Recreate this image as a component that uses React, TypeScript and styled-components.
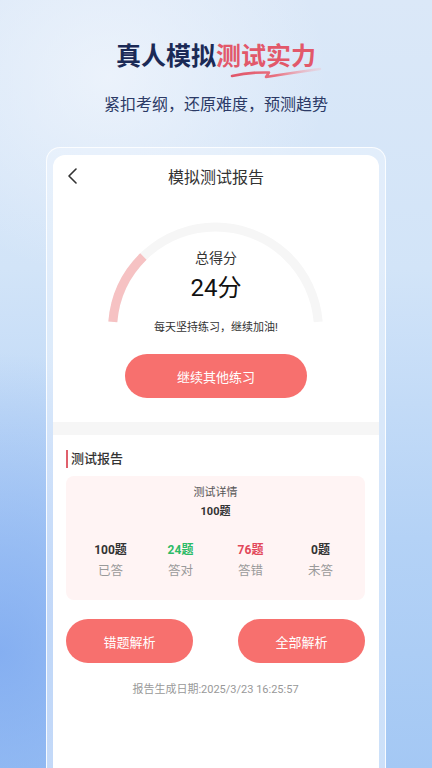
import React from "react";
import styled, { createGlobalStyle } from "styled-components";

const GlobalStyle = createGlobalStyle`
  html, body {
    margin: 0;
    padding: 0;
  }
  body {
    font-family: Roboto, "Noto Sans CJK SC", sans-serif;
    overflow: hidden;
  }
  * {
    box-sizing: border-box;
  }
`;

const stats = [
  { value: "100题", label: "已答", color: "#333333" },
  { value: "24题", label: "答对", color: "#2dbb67" },
  { value: "76题", label: "答错", color: "#e2485a" },
  { value: "0题", label: "未答", color: "#333333" },
];

// gauge geometry (svg box coords)
const CX = 114.5;
const CY = 115;
const R = 103;
const START = 175.5;
const END = 4.5;
const SCORE = 24;

const pt = (deg: number) => {
  const a = (deg * Math.PI) / 180;
  return [CX + R * Math.cos(a), CY - R * Math.sin(a)];
};

const arc = (from: number, to: number) => {
  const [x1, y1] = pt(from);
  const [x2, y2] = pt(to);
  const large = from - to > 180 ? 1 : 0;
  return `M ${x1} ${y1} A ${R} ${R} 0 ${large} 1 ${x2} ${y2}`;
};

export default function App() {
  const scoreEnd = START - ((START - END) * SCORE) / 100;
  return (
    <>
      <GlobalStyle />
      <Page>
        <Hero>
          <HeroTitle>
            真人模拟
            <Accent>
              测试实力
              <Swoosh viewBox="0 0 90 14" aria-hidden>
                <defs>
                  <linearGradient id="sw" x1="0" x2="1" y1="0" y2="0">
                    <stop offset="0" stopColor="#e0566a" />
                    <stop offset="0.5" stopColor="#e8707f" />
                    <stop offset="1" stopColor="#f3b6c0" stopOpacity="0.3" />
                  </linearGradient>
                </defs>
                <path
                  d="M1 10 Q 18 6 38 6.5 L 35 11 Q 60 7 89 3"
                  fill="none"
                  stroke="url(#sw)"
                  strokeWidth="2.6"
                  strokeLinecap="round"
                  strokeLinejoin="round"
                />
              </Swoosh>
            </Accent>
          </HeroTitle>
          <HeroSub>紧扣考纲，还原难度，预测趋势</HeroSub>
        </Hero>

        <Shell>
          <Card>
            <Header>
              <BackButton aria-label="返回">
                <svg width="11" height="16" viewBox="0 0 11 16">
                  <polyline
                    points="9,1 2,8 9,15"
                    fill="none"
                    stroke="#333"
                    strokeWidth="1.6"
                    strokeLinecap="round"
                    strokeLinejoin="round"
                  />
                </svg>
              </BackButton>
              <HeaderTitle>模拟测试报告</HeaderTitle>
            </Header>

            <ScoreSection>
              <Gauge>
                <GaugeArc viewBox="0 0 230 120">
                  <path d={arc(START, END)} fill="none" stroke="#f6f6f6" strokeWidth="9" />
                  <path d={arc(START, scoreEnd)} fill="none" stroke="#f6c2c3" strokeWidth="9" />
                </GaugeArc>
                <GaugeLabel>总得分</GaugeLabel>
                <GaugeScore>24分</GaugeScore>
              </Gauge>
              <Encourage>每天坚持练习，继续加油!</Encourage>
              <PrimaryButton $width={182}>继续其他练习</PrimaryButton>
            </ScoreSection>

            <Divider />

            <ReportSection>
              <SectionTitle>测试报告</SectionTitle>
              <DetailBox>
                <DetailTitle>测试详情</DetailTitle>
                <DetailTotal>100题</DetailTotal>
                <StatGrid>
                  {stats.map((s) => (
                    <Stat key={s.label}>
                      <StatValue $color={s.color}>{s.value}</StatValue>
                      <StatLabel>{s.label}</StatLabel>
                    </Stat>
                  ))}
                </StatGrid>
              </DetailBox>
              <ButtonRow>
                <PrimaryButton $width={127}>错题解析</PrimaryButton>
                <PrimaryButton $width={127}>全部解析</PrimaryButton>
              </ButtonRow>
              <DateText>报告生成日期:2025/3/23 16:25:57</DateText>
            </ReportSection>
          </Card>
        </Shell>
      </Page>
    </>
  );
}

const Page = styled.div`
  width: 432px;
  height: 768px;
  display: flex;
  flex-direction: column;
  overflow: hidden;
  background:
    radial-gradient(ellipse 260px 300px at 0% 85%, rgba(120, 165, 240, 0.75), rgba(120, 165, 240, 0) 100%),
    radial-gradient(ellipse 220px 200px at 25% 10%, rgba(240, 245, 252, 0.8), rgba(240, 245, 252, 0) 100%),
    linear-gradient(180deg, #dbe8f8 0%, #d2e4f8 35%, #b4d2f6 70%, #a4c8f4 100%);
`;

const Hero = styled.div`
  padding-top: 44px;
  display: flex;
  flex-direction: column;
  align-items: center;
`;

const HeroTitle = styled.h1`
  margin: 0;
  font-size: 25px;
  line-height: 26px;
  font-weight: 700;
  color: #1b2a56;
  letter-spacing: 0;
`;

const Accent = styled.span`
  position: relative;
  color: #e2586a;
`;

const Swoosh = styled.svg`
  position: absolute;
  left: 14px;
  top: 24px;
  width: 92px;
  height: 14px;
`;

const HeroSub = styled.p`
  margin: 27px 0 0;
  font-size: 16px;
  line-height: 16px;
  color: #2c3a66;
`;

const Shell = styled.div`
  flex: 1;
  margin: 34px 46px 0;
  padding: 7px 6px 0;
  border: 1px solid rgba(255, 255, 255, 0.85);
  border-bottom: none;
  border-radius: 14px 14px 0 0;
  background: rgba(236, 244, 253, 0.55);
  display: flex;
`;

const Card = styled.div`
  flex: 1;
  background: #ffffff;
  border-radius: 12px 12px 0 0;
  display: flex;
  flex-direction: column;
`;

const Header = styled.div`
  position: relative;
  height: 42px;
  display: flex;
  align-items: center;
  justify-content: center;
`;

const BackButton = styled.button`
  position: absolute;
  left: 14px;
  top: 13px;
  border: none;
  background: none;
  padding: 0;
  display: flex;
`;

const HeaderTitle = styled.div`
  font-size: 16px;
  color: #333333;
`;

const ScoreSection = styled.div`
  display: flex;
  flex-direction: column;
  align-items: center;
  padding-top: 18px;
`;

const Gauge = styled.div`
  position: relative;
  width: 230px;
  height: 100px;
  padding-top: 33px;
  display: flex;
  flex-direction: column;
  align-items: center;
`;

const GaugeArc = styled.svg`
  position: absolute;
  left: 0;
  top: 0;
  width: 230px;
  height: 120px;
`;

const GaugeLabel = styled.div`
  position: relative;
  font-size: 14px;
  line-height: 20px;
  color: #333333;
`;

const GaugeScore = styled.div`
  position: relative;
  margin-top: 5px;
  font-size: 24px;
  line-height: 30px;
  color: #111111;
`;

const Encourage = styled.div`
  margin-top: 5px;
  font-size: 11px;
  line-height: 16px;
  color: #333333;
`;

const PrimaryButton = styled.button<{ $width: number }>`
  width: ${(p) => p.$width}px;
  height: 44px;
  border: none;
  border-radius: 22px;
  background: #f7706e;
  color: #ffffff;
  font-family: Roboto, "Noto Sans CJK SC", sans-serif;
  font-size: 13px;
  margin-top: 18px;
  padding: 0;
`;

const Divider = styled.div`
  height: 13px;
  margin-top: 24px;
  background: #f6f6f6;
`;

const ReportSection = styled.div`
  padding: 15px 14px 0 13px;
  display: flex;
  flex-direction: column;
`;

const SectionTitle = styled.div`
  font-size: 13px;
  line-height: 18px;
  font-weight: 500;
  color: #333333;
  border-left: 2px solid #e0606c;
  padding-left: 3px;
  height: 18px;
  display: flex;
  align-items: center;
`;

const DetailBox = styled.div`
  margin-top: 8px;
  background: #fff4f4;
  border-radius: 8px;
  padding: 8px 0 20px;
  display: flex;
  flex-direction: column;
  align-items: center;
`;

const DetailTitle = styled.div`
  font-size: 11px;
  line-height: 17px;
  color: #555555;
`;

const DetailTotal = styled.div`
  margin-top: 3px;
  font-size: 11px;
  line-height: 16px;
  font-weight: 700;
  color: #333333;
`;

const StatGrid = styled.div`
  margin-top: 21px;
  display: grid;
  grid-template-columns: repeat(4, 70px);
  justify-content: center;
`;

const Stat = styled.div`
  display: flex;
  flex-direction: column;
  align-items: center;
`;

const StatValue = styled.div<{ $color: string }>`
  font-size: 12px;
  line-height: 18px;
  font-weight: 700;
  color: ${(p) => p.$color};
`;

const StatLabel = styled.div`
  margin-top: 3px;
  font-size: 12.5px;
  line-height: 18px;
  color: #9a9a9a;
`;

const ButtonRow = styled.div`
  display: flex;
  justify-content: space-between;
  margin-top: 1px;
`;

const DateText = styled.div`
  margin-top: 19px;
  text-align: center;
  font-size: 11px;
  line-height: 16px;
  color: #999999;
`;
